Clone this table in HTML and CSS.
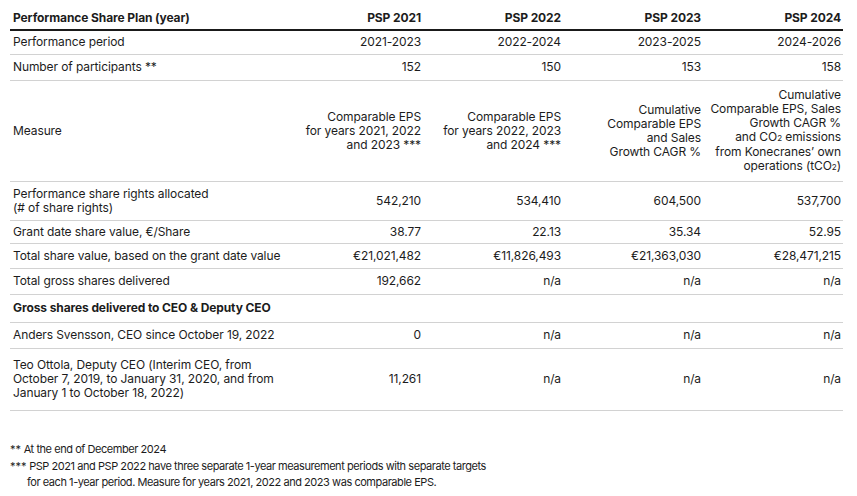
FILE: index.html
```html
<!DOCTYPE html>
<html lang="en">
<head>
<meta charset="utf-8">
<title>Performance Share Plan</title>
<link rel="stylesheet" href="styles.css">
</head>
<body>
<div class="page">
  <table class="psp">
    <colgroup>
      <col class="c-label"><col class="c-val"><col class="c-val"><col class="c-val"><col class="c-val">
    </colgroup>
    <thead>
      <tr>
        <th class="lbl">Performance Share Plan (year)</th>
        <th>PSP 2021</th>
        <th>PSP 2022</th>
        <th>PSP 2023</th>
        <th>PSP 2024</th>
      </tr>
    </thead>
    <tbody>
      <tr class="r23">
        <td class="lbl">Performance period</td>
        <td>2021-2023</td><td>2022-2024</td><td>2023-2025</td><td>2024-2026</td>
      </tr>
      <tr class="r25">
        <td class="lbl">Number of participants **</td>
        <td>152</td><td>150</td><td>153</td><td>158</td>
      </tr>
      <tr class="measure">
        <td class="lbl">Measure</td>
        <td>Comparable EPS<br>for years 2021, 2022<br>and 2023 ***</td>
        <td>Comparable EPS<br>for years 2022, 2023<br>and 2024 ***</td>
        <td>Cumulative<br>Comparable EPS<br>and Sales<br>Growth CAGR %</td>
        <td>Cumulative<br>Comparable EPS, Sales<br>Growth CAGR %<br>and CO<span class="sub">2</span> emissions<br>from Konecranes’ own<br>operations (tCO<span class="sub">2</span>)</td>
      </tr>
      <tr class="r38">
        <td class="lbl">Performance share rights allocated<br>(# of share rights)</td>
        <td>542,210</td><td>534,410</td><td>604,500</td><td>537,700</td>
      </tr>
      <tr class="r22">
        <td class="lbl">Grant date share value, €/Share</td>
        <td>38.77</td><td>22.13</td><td>35.34</td><td>52.95</td>
      </tr>
      <tr class="r24">
        <td class="lbl">Total share value, based on the grant date value</td>
        <td>€21,021,482</td><td>€11,826,493</td><td>€21,363,030</td><td>€28,471,215</td>
      </tr>
      <tr class="r25">
        <td class="lbl">Total gross shares delivered</td>
        <td>192,662</td><td>n/a</td><td>n/a</td><td>n/a</td>
      </tr>
      <tr class="section">
        <td class="lbl" colspan="5">Gross shares delivered to CEO &amp; Deputy CEO</td>
      </tr>
      <tr class="r25">
        <td class="lbl">Anders Svensson, CEO since October 19, 2022</td>
        <td>0</td><td>n/a</td><td>n/a</td><td>n/a</td>
      </tr>
      <tr class="last">
        <td class="lbl">Teo Ottola, Deputy CEO (Interim CEO, from<br>October 7, 2019, to January 31, 2020, and from<br>January 1 to October 18, 2022)</td>
        <td>11,261</td><td>n/a</td><td>n/a</td><td>n/a</td>
      </tr>
    </tbody>
  </table>

  <div class="notes">
    <div class="note"><span class="mark">**</span> At the end of December 2024</div>
    <div class="note hang"><span class="mark">***</span> PSP 2021 and PSP 2022 have three separate 1-year measurement periods with separate targets<br>for each 1-year period. Measure for years 2021, 2022 and 2023 was comparable EPS.</div>
  </div>
</div>
</body>
</html>
```

FILE: styles.css
```css
html, body {
  margin: 0;
  padding: 0;
  background: #ffffff;
}

body {
  font-family: Inter, "Noto Sans", "Liberation Sans", sans-serif;
  color: #1c1c1c;
  font-size: 12px;
  line-height: 14px;
}

.page {
  padding: 0 14px 0 10px;
}

.psp {
  width: 833px;
  table-layout: fixed;
  border-collapse: separate;
  border-spacing: 0;
}

.c-label { width: 273px; }
.c-val { width: 140px; }

.psp th,
.psp td {
  padding: 4px 2px 5px 3px;
  text-align: right;
  vertical-align: middle;
  border-bottom: 1px solid #d2d2d2;
  font-weight: 400;
  letter-spacing: -0.1px;
}

.psp th {
  font-weight: 700;
  padding-top: 11px;
  padding-bottom: 4px;
  border-bottom: 2px solid #1a1a1a;
}

.psp .lbl {
  text-align: left;
}

.psp tr.r22 td { padding-top: 4px; padding-bottom: 4px; }
.psp tr.r23 td { padding-top: 4px; padding-bottom: 5px; }
.psp tr.r24 td { padding-top: 5px; padding-bottom: 5px; }
.psp tr.r25 td { padding-top: 5px; padding-bottom: 6px; }
.psp tr.r38 td { padding-top: 5px; padding-bottom: 5px; }

.psp tr.measure td {
  padding-top: 7px;
  padding-bottom: 7px;
}

.psp tr.section td {
  font-weight: 700;
  padding-top: 6px;
  padding-bottom: 7px;
}

.psp tr.last td {
  padding-top: 9px;
  padding-bottom: 10px;
}

.sub {
  font-size: 8px;
  letter-spacing: 0;
}

.notes {
  margin-top: 30px;
  font-size: 11px;
  line-height: 16.5px;
  letter-spacing: -0.45px;
}

.note.hang {
  padding-left: 17px;
  text-indent: -17px;
}

.mark {
  letter-spacing: 0;
}
```
